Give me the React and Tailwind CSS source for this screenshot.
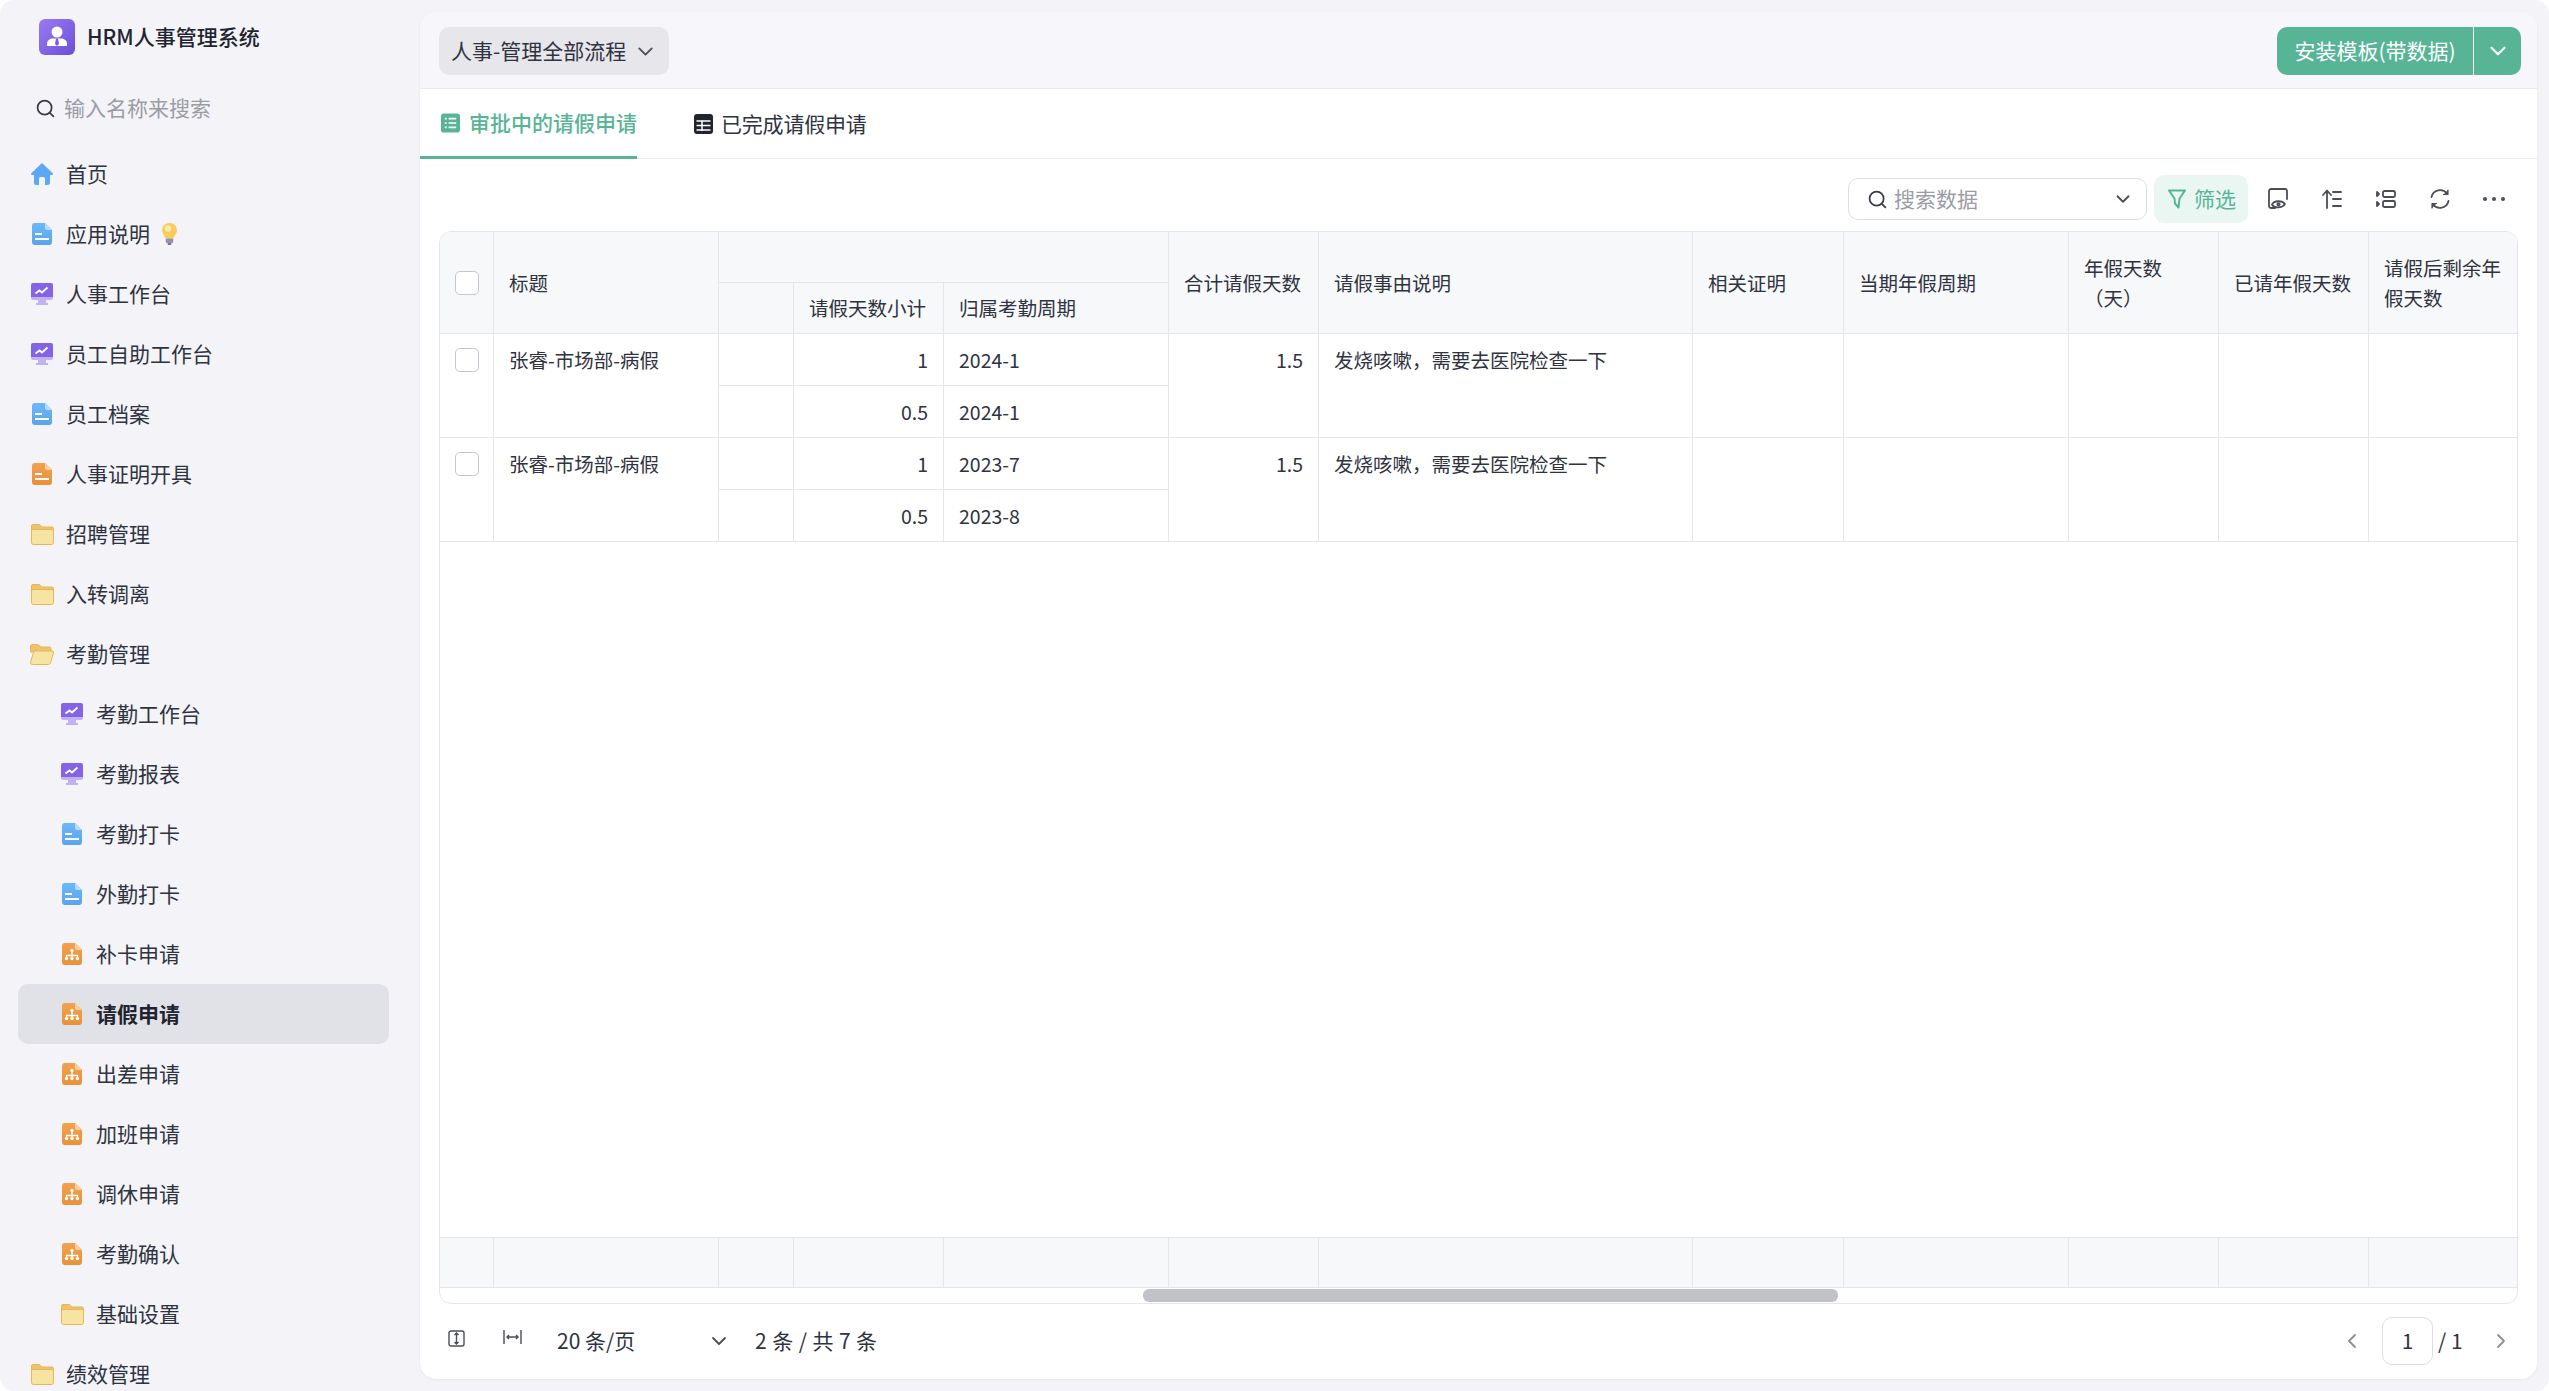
import { useId } from 'react'
import { ChevronDown, ChevronLeft, ChevronRight, Search } from 'lucide-react'

const COLS = [54, 225, 75, 150, 225, 150, 374, 151, 225, 150, 150, 148]

const NAV = [
  { label: '首页', icon: 'home' },
  { label: '应用说明', icon: 'blue', bulb: true },
  { label: '人事工作台', icon: 'chart' },
  { label: '员工自助工作台', icon: 'chart' },
  { label: '员工档案', icon: 'blue' },
  { label: '人事证明开具', icon: 'orange' },
  { label: '招聘管理', icon: 'folder' },
  { label: '入转调离', icon: 'folder' },
  { label: '考勤管理', icon: 'open' },
  { label: '考勤工作台', icon: 'chart', sub: true },
  { label: '考勤报表', icon: 'chart', sub: true },
  { label: '考勤打卡', icon: 'blue', sub: true },
  { label: '外勤打卡', icon: 'blue', sub: true },
  { label: '补卡申请', icon: 'org', sub: true },
  { label: '请假申请', icon: 'org', sub: true, active: true },
  { label: '出差申请', icon: 'org', sub: true },
  { label: '加班申请', icon: 'org', sub: true },
  { label: '调休申请', icon: 'org', sub: true },
  { label: '考勤确认', icon: 'org', sub: true },
  { label: '基础设置', icon: 'folder', sub: true },
  { label: '绩效管理', icon: 'folder' }
]

const ROWS = [
  { title: '张睿-市场部-病假', total: '1.5', reason: '发烧咳嗽，需要去医院检查一下', items: [['1', '2024-1'], ['0.5', '2024-1']] },
  { title: '张睿-市场部-病假', total: '1.5', reason: '发烧咳嗽，需要去医院检查一下', items: [['1', '2023-7'], ['0.5', '2023-8']] }
]

function DocShape({ from, to, fold, children }) {
  const id = useId()
  return (
    <svg width="20" height="22" viewBox="0 0 20 22">
      <defs>
        <linearGradient id={id} x1="0" y1="0" x2="0" y2="1">
          <stop offset="0" stopColor={from} />
          <stop offset="1" stopColor={to} />
        </linearGradient>
      </defs>
      <path d="M3 0H13L20 7V19A3 3 0 0 1 17 22H3A3 3 0 0 1 0 19V3A3 3 0 0 1 3 0Z" fill={`url(#${id})`} />
      <path d="M13 0L20 7H15A2 2 0 0 1 13 5Z" fill={fold} />
      {children}
    </svg>
  )
}

function NavIcon({ type }) {
  if (type === 'home') {
    return (
      <svg width="22" height="22" viewBox="0 0 22 22">
        <path fillRule="evenodd" d="M11 0L22 10.5C22 11.5 21.4 12 20.5 12H19V19.5A2.5 2.5 0 0 1 16.5 22H14V15.5A1.5 1.5 0 0 0 12.5 14H9.5A1.5 1.5 0 0 0 8 15.5V22H5.500A2.500 2.500 0 0 1 3 19.500V12H1.500C.6 12 0 11.500 0 10.500Z" fill="#5ba9f4" />
      </svg>
    )
  }
  if (type === 'blue' || type === 'orange') {
    const blue = type === 'blue'
    return (
      <DocShape from={blue ? '#6cb6f9' : '#f1a24e'} to={blue ? '#5aa4ec' : '#e98f38'} fold={blue ? '#b5dbfc' : '#f7cf9f'}>
        <rect x="3" y="10" width="7" height="2" fill="#fff" />
        <rect x="3" y="15" width="14" height="2" fill="#fff" />
      </DocShape>
    )
  }
  if (type === 'org') {
    return (
      <DocShape from="#f1a24e" to="#ea9138" fold="#f7cf9f">
        <path d="M10 8V15M4.500 15V12.500H15.500V15" fill="none" stroke="#fff" strokeWidth="1.300" />
        <circle cx="10" cy="7.500" r="1.700" fill="#fff" />
        <circle cx="4.500" cy="15.500" r="1.700" fill="#fff" />
        <circle cx="10" cy="15.500" r="1.700" fill="#fff" />
        <circle cx="15.500" cy="15.500" r="1.700" fill="#fff" />
      </DocShape>
    )
  }
  if (type === 'chart') {
    return (
      <svg width="22" height="22" viewBox="0 0 22 22">
        <path d="M7 16H15V20H17V22H5V20H7Z" fill="#c3b1f6" />
        <path d="M2 0H20A2 2 0 0 1 22 2V14H0V2A2 2 0 0 1 2 0Z" fill="#8563e6" />
        <path d="M0 14H22V15A2 2 0 0 1 20 17H2A2 2 0 0 1 0 15Z" fill="#c3b1f6" />
        <path d="M4.500 10.500L8.500 7.500L11 9.500L16.500 4.500" fill="none" stroke="#fff" strokeWidth="1.800" />
      </svg>
    )
  }
  if (type === 'open') {
    return (
      <svg width="24" height="21" viewBox="0 0 24 21">
        <path d="M2 .5H8L11 3H19.500A1.500 1.500 0 0 1 21 4.500V8H.5V2A1.500 1.500 0 0 1 2 .5Z" fill="#eec36c" stroke="#e7b656" />
        <path d="M2.500 20.500A2 2 0 0 1 .6 18L3.500 8.500A2 2 0 0 1 5.400 7H22A1.500 1.500 0 0 1 23.400 9L20.500 19A2 2 0 0 1 18.600 20.500Z" fill="#f8e4a2" stroke="#e7b656" />
      </svg>
    )
  }
  return (
    <svg width="23" height="21" viewBox="0 0 23 21">
      <path d="M2 .5H8.500L11 3H21A1.500 1.500 0 0 1 22.500 4.500V10H.5V2A1.500 1.500 0 0 1 2 .5Z" fill="#eec36c" stroke="#e7b656" />
      <path d="M2 5.500H21A1.500 1.500 0 0 1 22.500 7V18.500A2 2 0 0 1 20.500 20.500H2.500A2 2 0 0 1 .5 18.500V7A1.500 1.500 0 0 1 2 5.500Z" fill="#f8e4a2" stroke="#e7b656" />
    </svg>
  )
}

function Bulb() {
  return (
    <svg width="15" height="22" viewBox="0 0 15 22">
      <path d="M7.500 0A7.300 7.300 0 0 1 15 7.300C15 10.500 12.500 12 11.500 15.500H3.500C2.500 12 0 10.500 0 7.300A7.300 7.300 0 0 1 7.500 0Z" fill="#f6cc5b" />
      <circle cx="6" cy="5.500" r="3.200" fill="#fbe9a8" />
      <rect x="3.800" y="15.500" width="7.400" height="4.500" rx="1" fill="#9a8db0" />
      <rect x="5.500" y="20" width="4" height="2" rx="1" fill="#7d6e9a" />
    </svg>
  )
}

function Logo() {
  return (
    <svg width="36" height="36" viewBox="0 0 36 36">
      <defs>
        <linearGradient id="logo-bg" x1="0" y1="0" x2="1" y2="1">
          <stop offset="0" stopColor="#9a7af2" />
          <stop offset="1" stopColor="#6c4fd9" />
        </linearGradient>
      </defs>
      <rect width="36" height="36" rx="6" fill="url(#logo-bg)" />
      <circle cx="18" cy="13" r="5.500" fill="#fff" />
      <path d="M8 27V24.500C8 21.500 11 19.500 14 19.500H22C25 19.500 28 21.500 28 24.500V27Z" fill="#fff" />
      <path d="M17 19.500H19L20 25L18 27L16 25Z" fill="#7a5be0" />
    </svg>
  )
}

function Sidebar() {
  return (
    <aside className="flex h-screen w-[420px] shrink-0 flex-col overflow-hidden">
      <div className="flex h-[74px] shrink-0 items-center gap-[12px] pl-[39px]">
        <Logo />
        <span className="text-[21px] font-medium text-[#1f2430]">HRM人事管理系统</span>
      </div>
      <div className="flex h-[68px] shrink-0 items-center gap-[8px] pl-[35px] text-[21px] text-[#9b9ca5]">
        <Search size={21} strokeWidth={2} className="text-[#3a3d47]" />
        <span>输入名称来搜索</span>
      </div>
      <nav className="flex flex-col px-[18px] pt-[2px]">
        {NAV.map(item => (
          <div
            key={item.label}
            className={
              item.active
                ? 'flex h-[60px] w-[371px] shrink-0 items-center rounded-[10px] bg-[#e1e2e7] pl-[42px] pr-2 text-[21px] font-bold text-[#1f2430]'
                : item.sub
                  ? 'flex h-[60px] shrink-0 items-center pl-[42px] text-[21px] text-[#2f3340]'
                  : 'flex h-[60px] shrink-0 items-center pl-[12px] text-[21px] text-[#2f3340]'
            }
          >
            <span className="flex w-[24px] shrink-0 justify-center">
              <NavIcon type={item.icon} />
            </span>
            <span className="ml-[12px]">{item.label}</span>
            {item.bulb && (
              <span className="ml-[12px] flex">
                <Bulb />
              </span>
            )}
          </div>
        ))}
      </nav>
    </aside>
  )
}

function Checkbox() {
  return <span className="block h-[24px] w-[24px] rounded-[5px] border border-[#c5c6cf] bg-white" />
}

function Colgroup() {
  return (
    <colgroup>
      {COLS.map((w, i) => (
        <col key={i} width={w} />
      ))}
    </colgroup>
  )
}

function DataTable() {
  const th = 'border-r border-b border-[#e5e6eb] bg-[#f7f8fa] px-[15px] text-left font-normal leading-[30px]'
  const td = 'border-r border-b border-[#e5e6eb] px-[15px] align-top'
  const blank = ['相关证明', '当期年假周期', '年假天数（天）', '已请年假天数', '请假后剩余年假天数']
  return (
    <table className="w-[2077px] table-fixed border-separate border-spacing-0 text-[19.5px] text-[#2f3340]">
      <Colgroup />
      <thead>
        <tr className="h-[51px]">
          <th rowSpan={2} className="border-r border-b border-[#e5e6eb] bg-[#f7f8fa] pl-[15px] font-normal">
            <Checkbox />
          </th>
          <th rowSpan={2} className={th}>标题</th>
          <th colSpan={3} className={th} />
          <th rowSpan={2} className={th}>合计请假天数</th>
          <th rowSpan={2} className={th}>请假事由说明</th>
          <th rowSpan={2} className={th}>相关证明</th>
          <th rowSpan={2} className={th}>当期年假周期</th>
          <th rowSpan={2} className={th}>年假天数<br />（天）</th>
          <th rowSpan={2} className={th}>已请年假天数</th>
          <th rowSpan={2} className="border-b border-[#e5e6eb] bg-[#f7f8fa] px-[15px] text-left font-normal leading-[30px]">请假后剩余年假天数</th>
        </tr>
        <tr className="h-[51px]">
          <th className={th} />
          <th className={th}>请假天数小计</th>
          <th className={th}>归属考勤周期</th>
        </tr>
      </thead>
      <tbody>
        {ROWS.map((row, r) =>
          row.items.map(([days, period], i) => (
            <tr key={`${r}-${i}`} className="h-[52px]">
              {i === 0 && (
                <>
                  <td rowSpan={2} className="border-r border-b border-[#e5e6eb] pl-[15px] pt-[14px] align-top">
                    <Checkbox />
                  </td>
                  <td rowSpan={2} className={`${td} pt-[11px]`}>{row.title}</td>
                </>
              )}
              <td className="border-r border-b border-[#e5e6eb]" />
              <td className="border-r border-b border-[#e5e6eb] px-[15px] text-right">{days}</td>
              <td className="border-r border-b border-[#e5e6eb] px-[15px]">{period}</td>
              {i === 0 && (
                <>
                  <td rowSpan={2} className={`${td} pt-[11px] text-right`}>{row.total}</td>
                  <td rowSpan={2} className={`${td} pt-[11px]`}>{row.reason}</td>
                  {blank.map((b, k) => (
                    <td key={b} rowSpan={2} className={k === 4 ? 'border-b border-[#e5e6eb]' : 'border-r border-b border-[#e5e6eb]'} />
                  ))}
                </>
              )}
            </tr>
          ))
        )}
      </tbody>
    </table>
  )
}

function SummaryRow() {
  return (
    <table className="w-[2077px] table-fixed border-separate border-spacing-0">
      <Colgroup />
      <tbody>
        <tr className="h-[51px]">
          {COLS.map((w, i) => (
            <td
              key={i}
              className={
                i === COLS.length - 1
                  ? 'border-y border-[#e5e6eb] bg-[#f7f8fa]'
                  : 'border-y border-r border-[#e5e6eb] bg-[#f7f8fa]'
              }
            />
          ))}
        </tr>
      </tbody>
    </table>
  )
}

function ToolIcon({ children }) {
  return (
    <span className="flex w-[54px] justify-center">
      <svg width="22" height="22" viewBox="0 0 22 22" fill="none" stroke="#4b4d57" strokeWidth="1.800" strokeLinecap="round" strokeLinejoin="round">
        {children}
      </svg>
    </span>
  )
}

function Toolbar() {
  return (
    <div className="flex h-[72px] shrink-0 items-center justify-end pt-[8px] pr-4">
      <div className="flex h-[42px] w-[299px] items-center rounded-[10px] border border-[#dcdde5] pl-[18px] pr-[12px] text-[21px] text-[#9b9ca5]">
        <Search size={21} strokeWidth={2} className="text-[#3a3d47]" />
        <span className="ml-[6px] flex-1">搜索数据</span>
        <ChevronDown size={22} strokeWidth={2} className="text-[#4b4d57]" />
      </div>
      <div className="ml-[7px] flex h-[48px] w-[94px] items-center gap-[8px] rounded-[10px] bg-[#e9f6f2] pl-[14px] text-[21px] text-[#57b596]">
        <svg width="18" height="20" viewBox="0 0 18 20" fill="none" stroke="#57b596" strokeWidth="2" strokeLinejoin="round">
          <path d="M1 1.500H17L11.500 9.500L10.500 18.500L7 14.500L6.500 9.500Z" />
        </svg>
        <span>筛选</span>
      </div>
      <span className="ml-[3px] flex items-center">
        <ToolIcon>
          <path d="M8 20H4A2 2 0 0 1 2 18V3A2 2 0 0 1 4 1H18A2 2 0 0 1 20 3V11" />
          <path d="M5 16.500C7 12.500 15 12 18 16C15 20.500 7 20.500 5 16.500Z" />
          <circle cx="11.500" cy="16.300" r="1.200" />
        </ToolIcon>
        <ToolIcon>
          <path d="M6 20V3M2 7L6 2.500L10 7" />
          <path d="M12 4H20M12 11H20M12 18H20" />
        </ToolIcon>
        <ToolIcon>
          <rect x="8" y="3" width="12" height="6" rx="1.500" />
          <rect x="8" y="13" width="12" height="6" rx="1.500" />
          <path d="M2 4L4 6L2 8ZM2 14L4 16L2 18Z" fill="#4b4d57" />
        </ToolIcon>
        <ToolIcon>
          <path d="M2.500 9A8.800 8.800 0 0 1 18 5.500" />
          <path d="M19.500 13A8.800 8.800 0 0 1 4 16.500" />
          <path d="M19 2V6.500H14.500M3 20V15.500H7.500" fill="#4b4d57" strokeWidth="1.200" />
        </ToolIcon>
        <span className="flex w-[54px] items-center justify-center gap-[5px]">
          <i className="h-[4px] w-[4px] rounded-full bg-[#4b4d57]" />
          <i className="h-[4px] w-[4px] rounded-full bg-[#4b4d57]" />
          <i className="h-[4px] w-[4px] rounded-full bg-[#4b4d57]" />
        </span>
      </span>
    </div>
  )
}

function Footer() {
  return (
    <div className="flex flex-1 items-center pb-[1px] pl-[29px] pr-[24px] text-[21px] text-[#2f3340]">
      <svg className="-mt-[6px] ml-[-1px]" width="17" height="17" viewBox="0 0 17 17" fill="none" stroke="#4b4d57" strokeWidth="1.400">
        <rect x="1" y="1" width="15" height="15" rx="2" />
        <path d="M8.500 3V14M6.500 5L8.500 3L10.500 5M6.500 12L8.500 14L10.500 12" />
      </svg>
      <svg className="-mt-[8px] ml-[38px]" width="19" height="14" viewBox="0 0 19 14" fill="none" stroke="#4b4d57" strokeWidth="1.400">
        <path d="M1 0V14M18 0V14M4 7H15M6 5L4 7L6 9M13 5L15 7L13 9" />
      </svg>
      <span className="ml-[35px] w-[150px] whitespace-pre">20 条/页</span>
      <ChevronDown size={24} strokeWidth={1.800} className="text-[#4b4d57]" />
      <span className="ml-[24px] whitespace-pre tracking-[0.4px]">2 条 / 共 7 条</span>
      <div className="ml-auto flex items-center">
        <ChevronLeft size={24} strokeWidth={1.800} className="text-[#8b8d97]" />
        <span className="ml-[18px] flex h-[48px] w-[51px] items-center justify-center rounded-[10px] border border-[#dcdde5]">1</span>
        <span className="ml-[5px] w-[25px] whitespace-pre">/ 1</span>
        <ChevronRight size={24} strokeWidth={1.800} className="ml-[26px] text-[#8b8d97]" />
      </div>
    </div>
  )
}

export default function App() {
  return (
    <div className="h-screen w-full overflow-hidden bg-white" style={{ fontFamily: '"Noto Sans CJK SC", "Noto Sans", sans-serif' }}>
      <div className="flex h-full w-full rounded-[14px] bg-[#f3f3f8] pr-3">
        <Sidebar />
        <main className="mt-3 mb-3 flex min-w-0 flex-1 flex-col overflow-hidden rounded-[16px] bg-white shadow-[0_1px_3px_rgba(0,0,0,0.06)]">
          <header className="flex h-[77px] shrink-0 items-center justify-between border-b border-[#e8e8ee] bg-[#f6f6fb] pl-[19px] pr-4 pt-[2px]">
            <div className="flex h-[48px] w-[230px] items-center rounded-[10px] bg-[#e6e6eb] pl-[12px] text-[21px] text-[#2f3340]">
              <span className="whitespace-nowrap">人事-管理全部流程</span>
              <ChevronDown size={25} strokeWidth={1.800} className="ml-[7px] text-[#4b4d57]" />
            </div>
            <div className="flex h-[48px] w-[244px] items-center rounded-[10px] bg-[#57b596] text-[21px] text-white">
              <span className="flex h-full w-[197px] items-center justify-center whitespace-nowrap border-r border-white">安装模板(带数据)</span>
              <span className="flex flex-1 items-center justify-center">
                <ChevronDown size={26} strokeWidth={2} />
              </span>
            </div>
          </header>
          <div className="flex h-[70px] shrink-0 items-stretch border-b border-[#e8e8ee] text-[21px]">
            <div className="-mb-[1px] flex w-[217px] items-center gap-[9px] border-b-[3px] border-[#57b596] pl-[21px] font-medium text-[#57b596]">
              <svg width="20" height="20" viewBox="0 0 20 20">
                <rect width="20" height="20" rx="3" fill="#57b596" />
                <path d="M4 5.500H6M8 5.500H16M4 10H6M8 10H16M4 14.500H6M8 14.500H16" stroke="#fff" strokeWidth="1.800" />
              </svg>
              <span className="whitespace-nowrap">审批中的请假申请</span>
            </div>
            <div className="ml-[37px] flex items-center gap-[8px] pl-[20px] text-[#2f3340]">
              <svg width="19" height="20" viewBox="0 0 19 20" fill="none">
                <rect width="19" height="20" rx="3" fill="#1f2430" />
                <path d="M2.500 7H16.500M2.500 11.500H16.500M2.500 16H16.500M8 7V17" stroke="#fff" strokeWidth="1.500" />
              </svg>
              <span className="whitespace-nowrap tracking-[-0.2px]">已完成请假申请</span>
            </div>
          </div>
          <Toolbar />
          <div className="ml-[19px] mr-[19px] flex h-[1073px] shrink-0 flex-col overflow-hidden rounded-[12px] border border-[#e5e6eb]">
            <div className="flex-1 overflow-hidden">
              <DataTable />
            </div>
            <SummaryRow />
            <div className="h-[15px] shrink-0 pt-[1px]">
              <div className="ml-[703px] h-[13px] w-[695px] rounded-[6px] bg-[#c1c2c7]" />
            </div>
          </div>
          <Footer />
        </main>
      </div>
    </div>
  )
}
